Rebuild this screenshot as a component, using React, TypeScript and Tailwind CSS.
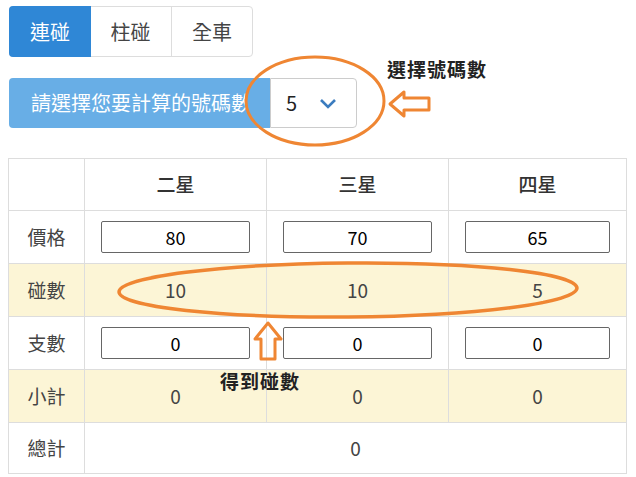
import React, { useState } from 'react';

const rows = [
  { label: '價格', kind: 'input', values: ['80', '70', '65'] },
  { label: '碰數', kind: 'text', values: ['10', '10', '5'], warn: true },
  { label: '支數', kind: 'input', values: ['0', '0', '0'] },
  { label: '小計', kind: 'text', values: ['0', '0', '0'], warn: true },
];

const tabs = ['連碰', '柱碰', '全車'];

const App: React.FC = () => {
  const [active, setActive] = useState(0);

  return (
    <div
      className="relative w-[636px] h-[477px] bg-white text-[#333] pl-[9px] pt-[6px] overflow-hidden"
      style={{ fontFamily: '"Noto Sans CJK TC", "Noto Sans", sans-serif' }}
    >
      {/* tabs */}
      <div className="inline-flex h-[51px] border border-[#ddd] rounded-[4px]">
        {tabs.map((t, i) => (
          <button
            key={t}
            onClick={() => setActive(i)}
            className={`flex items-center justify-center text-[20px] ${i === 0 ? 'w-[82px] rounded-l-[4px] -m-px h-[51px]' : 'w-[81px]'} ${i === 2 ? 'border-l border-[#ddd]' : ''} ${active === i ? 'bg-[#2f87d6] text-white' : 'text-[#444]'}`}
          >
            {t}
          </button>
        ))}
      </div>

      {/* select row */}
      <div className="flex h-[50px] mt-[21px]">
        <div className="w-[261px] bg-[#68aee6] text-white text-[20px] rounded-l-[4px] flex items-center pl-[22px] pr-[24px] overflow-hidden whitespace-nowrap">
          <span className="overflow-hidden">請選擇您要計算的號碼數</span>
        </div>
        <div className="w-[87px] border border-[#ccc] rounded-r-[4px] flex items-center pl-[15px] gap-[22px] text-[20px] text-[#222]">
          <span>5</span>
          <svg width="18" height="12" viewBox="0 0 18 12">
            <polyline points="2,3 9,10 16,3" fill="none" stroke="#3b7cbf" strokeWidth="2.6" />
          </svg>
        </div>
      </div>

      {/* table */}
      <table className="mt-[30px] w-[619px] table-fixed border-collapse text-[19px] -ml-px">
        <colgroup>
          <col className="w-[76px]" />
          <col className="w-[182px]" />
          <col className="w-[182px]" />
          <col />
        </colgroup>
        <thead>
          <tr className="h-[52px]">
            <th className="border border-[#ddd]"></th>
            {['二星', '三星', '四星'].map((h) => (
              <th key={h} className="border border-[#ddd] font-medium text-[#333]">{h}</th>
            ))}
          </tr>
        </thead>
        <tbody>
          {rows.map((r) => (
            <tr key={r.label} className={`h-[53px] ${r.warn ? 'bg-[#fcf5d6]' : ''}`}>
              <td className="border border-[#ddd] text-center text-[#444]">{r.label}</td>
              {r.values.map((v, i) => (
                <td key={i} className="border border-[#ddd] text-center px-[16px] text-[#444]">
                  {r.kind === 'input' ? (
                    <input
                      defaultValue={v}
                      className="w-full h-[32px] border border-[#666] rounded-[2px] text-center text-[18px] text-black bg-white outline-none"
                    />
                  ) : (
                    v
                  )}
                </td>
              ))}
            </tr>
          ))}
          <tr className="h-[51px]">
            <td className="border border-[#ddd] text-center text-[#444]">總計</td>
            <td colSpan={3} className="border border-[#ddd] text-center text-[#444]">0</td>
          </tr>
        </tbody>
      </table>

      {/* annotations */}
      <svg className="absolute left-0 top-0 pointer-events-none" width="636" height="477">
        <ellipse cx="315" cy="101" rx="69" ry="44" fill="none" stroke="#ef8633" strokeWidth="3" />
        <path
          d="M390 104 L404 92 L404 98 L429 98 L429 110 L404 110 L404 116 Z"
          fill="none"
          stroke="#ef8633"
          strokeWidth="3"
          strokeLinejoin="round"
        />
        <ellipse cx="348" cy="290" rx="229" ry="27" fill="none" stroke="#ef8633" strokeWidth="3.5" transform="rotate(-0.5 348 290)" />
        <path
          d="M268 323 L281 339 L275 339 L275 359 L261 359 L261 339 L255 339 Z"
          fill="none"
          stroke="#ef8633"
          strokeWidth="3"
          strokeLinejoin="round"
        />
      </svg>
      <div className="absolute left-[387px] top-[55px] text-[19px] font-bold text-[#222] tracking-[1px]">選擇號碼數</div>
      <div className="absolute left-[220px] top-[367px] text-[19px] font-bold text-[#222] tracking-[1px]">得到碰數</div>
    </div>
  );
};

export default App;
